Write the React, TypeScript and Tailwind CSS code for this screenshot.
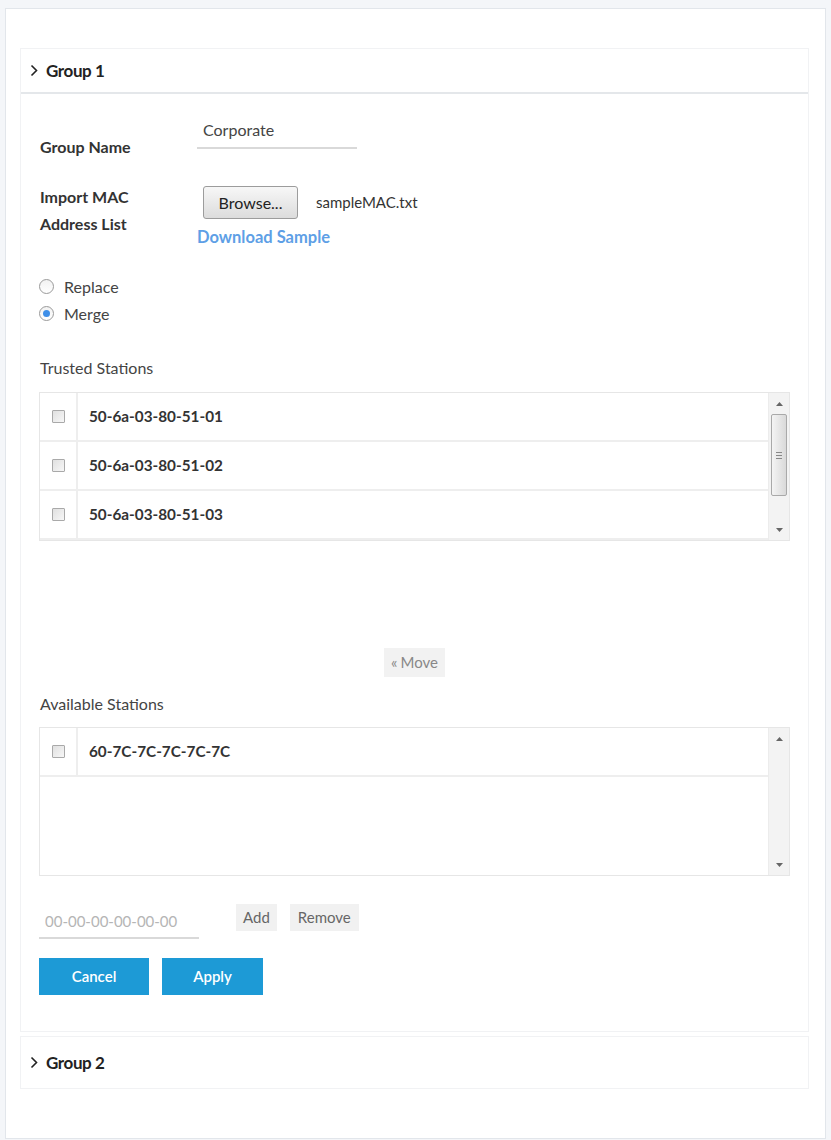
const trusted = ["50-6a-03-80-51-01", "50-6a-03-80-51-02", "50-6a-03-80-51-03"];
const available = ["60-7C-7C-7C-7C-7C"];

function Chevron() {
  return (
    <svg width="8" height="13" viewBox="0 0 8 13" fill="none">
      <path d="M1.5 1.5 6.5 6.5 1.5 11.5" stroke="#222" strokeWidth="1.6" />
    </svg>
  );
}

function GroupHeader({ title, border }: { title: string; border?: boolean }) {
  return (
    <div
      className={`flex items-center gap-[8px] pl-[9px] text-[17px] font-bold text-[#222] ${
        border ? "h-[45px] border-b-2 border-[#e4e7ea]" : "h-[51px]"
      }`}
    >
      <Chevron />
      <span className="tracking-[-0.4px]">{title}</span>
    </div>
  );
}

function Checkbox() {
  return (
    <span className="block h-[13px] w-[13px] rounded-[1px] border border-[#a9a9a9] bg-gradient-to-br from-[#e0e0e0] to-[#f7f7f7]" />
  );
}

function Scrollbar({ thumb }: { thumb?: boolean }) {
  return (
    <div className="flex w-[21px] flex-col items-center border-l border-[#ececec] bg-[#f3f3f3]">
      <div className="flex h-[21px] items-center justify-center">
        <svg width="7" height="4" viewBox="0 0 7 4">
          <path d="M0 4 3.5 0 7 4Z" fill="#666" />
        </svg>
      </div>
      <div className="w-full flex-1 px-[2px]">
        {thumb && (
          <div className="flex h-[82px] w-full items-center justify-center rounded-[2px] border border-[#a9a9a9] bg-gradient-to-r from-[#f4f4f4] to-[#d9d9d9]">
            <div className="flex flex-col gap-[2px]">
              <span className="block h-px w-[6px] bg-[#888]" />
              <span className="block h-px w-[6px] bg-[#888]" />
              <span className="block h-px w-[6px] bg-[#888]" />
            </div>
          </div>
        )}
      </div>
      <div className="flex h-[20px] items-center justify-center">
        <svg width="7" height="4" viewBox="0 0 7 4">
          <path d="M0 0 3.5 4 7 0Z" fill="#666" />
        </svg>
      </div>
    </div>
  );
}

function StationList({ items, thumb }: { items: string[]; thumb?: boolean }) {
  return (
    <div className="flex h-[149px] border border-[#e6e6e6]">
      <div className="flex-1">
        {items.map((mac) => (
          <div key={mac} className="flex h-[49px] border-b-2 border-[#eeeeee]">
            <div className="flex w-[38px] items-center justify-center border-r-2 border-[#eeeeee]">
              <Checkbox />
            </div>
            <div className="flex items-center pl-[11px] text-[15.3px] font-bold text-[#333]">
              {mac}
            </div>
          </div>
        ))}
      </div>
      <Scrollbar thumb={thumb} />
    </div>
  );
}

function Radio({ label, checked }: { label: string; checked?: boolean }) {
  return (
    <label className="flex h-[27px] items-center gap-[10px] text-[16px] text-[#444]">
      <span className="flex h-[15px] w-[15px] items-center justify-center rounded-full border border-[#9a9a9a] bg-gradient-to-b from-[#f2f2f2] to-white">
        {checked && <span className="block h-[7px] w-[7px] rounded-full bg-[#3f8fe8]" />}
      </span>
      {label}
    </label>
  );
}

export default function App() {
  return (
    <div
      className="min-h-[1140px] bg-[#f4f6f9] px-[5px] pt-[8px]"
      style={{ fontFamily: "Lato, 'Noto Sans', sans-serif" }}
    >
      <div className="h-[1131px] border border-[#e2e6eb] bg-white pl-[14px] pr-[16px] pt-[39px]">
        {/* Group 1 */}
        <div className="border border-[#f1f2f4]">
          <GroupHeader title="Group 1" border />

          <div className="px-[18px] pt-[23px] pb-[36px]">
            {/* Group name */}
            <div className="flex">
              <div className="mt-[20px] w-[158px] pl-[1px] text-[16px] font-bold leading-5 text-[#333]">
                Group Name
              </div>
              <input
                readOnly
                value="Corporate"
                className="h-[32px] w-[160px] border-b-2 border-[#d9d9d9] pb-[5px] pl-[6px] text-[16px] text-[#444] outline-none"
              />
            </div>

            {/* Import MAC list */}
            <div className="mt-[26px] flex">
              <div className="w-[158px] pl-[1px] text-[16px] font-bold leading-[27px] text-[#333]">
                Import MAC
                <br />
                Address List
              </div>
              <div className="flex flex-col">
                <div className="mt-[3px] flex items-center">
                  <button className="ml-[6px] h-[33px] w-[95px] rounded-[3px] border border-[#9c9c9c] bg-gradient-to-b from-[#f7f7f7] to-[#dcdcdc] text-[16px] text-[#222]">
                    Browse...
                  </button>
                  <span className="ml-[18px] text-[15px] text-[#333]">sampleMAC.txt</span>
                </div>
                <a className="mt-[8px] text-[16.5px] font-bold leading-5 text-[#5e9fe6]">
                  Download Sample
                </a>
              </div>
            </div>

            {/* Import mode */}
            <div className="mt-[26px] flex flex-col">
              <Radio label="Replace" />
              <Radio label="Merge" checked />
            </div>

            {/* Trusted stations */}
            <div className="mt-[31px] pl-[1px] text-[16px] leading-5 text-[#444]">Trusted Stations</div>
            <div className="mt-[14px]">
              <StationList items={trusted} thumb />
            </div>

            <div className="mt-[107px] flex justify-center">
              <button className="flex h-[29px] items-center gap-[3px] bg-[#f2f2f2] px-[7px] text-[15px] text-[#888]">
                <span className="text-[15px] leading-none">«</span>Move
              </button>
            </div>

            {/* Available stations */}
            <div className="mt-[17px] pl-[1px] text-[16px] leading-5 text-[#444]">Available Stations</div>
            <div className="mt-[13px]">
              <StationList items={available} />
            </div>

            {/* Manual entry */}
            <div className="mt-[28px] flex items-start">
              <input
                readOnly
                placeholder="00-00-00-00-00-00"
                className="h-[35px] w-[160px] border-b-2 border-[#d9d9d9] pl-[6px] text-[15px] text-[#444] outline-none placeholder:text-[#b5b5b5]"
              />
              <button className="ml-[37px] h-[27px] bg-[#f1f1f1] px-[7px] text-[15px] text-[#666]">
                Add
              </button>
              <button className="ml-[13px] h-[27px] bg-[#f1f1f1] px-[8px] text-[15px] text-[#666]">
                Remove
              </button>
            </div>

            <div className="mt-[19px] flex gap-[13px]">
              <button className="h-[37px] w-[110px] bg-[#1d9ad6] text-[15px] font-semibold text-white">
                Cancel
              </button>
              <button className="h-[37px] w-[101px] bg-[#1d9ad6] text-[15px] font-semibold text-white">
                Apply
              </button>
            </div>
          </div>
        </div>

        {/* Group 2 */}
        <div className="mt-[4px] border border-[#f1f2f4]">
          <GroupHeader title="Group 2" />
        </div>
      </div>
    </div>
  );
}
